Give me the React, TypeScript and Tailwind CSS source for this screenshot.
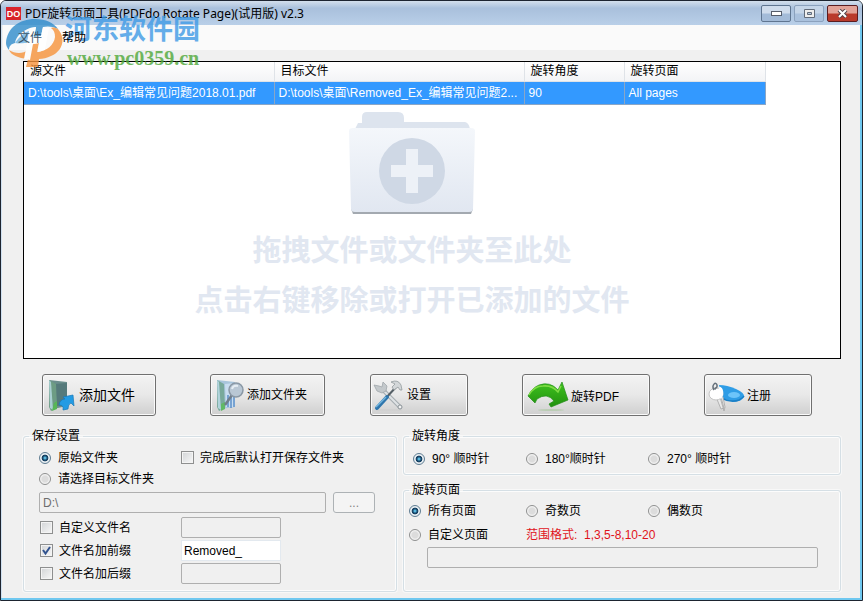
import { useState, type ReactNode } from "react";

function Logo() {
  return (
    <svg className="h-[54px] w-[60px] shrink-0" viewBox="0 0 60 54" aria-hidden="true">
      <path d="M1 27C2 12 14 3 30 3C41 3 49 7 53 13C47 10 42 10 38 11L36 20L29 21L31 11L25 12C17 15 11 20 10 27C6 28 4 30 4 34C2 32 1 29 1 27Z" fill="#2f8ccb" />
      <path d="M10 27C15 20 20 16 24 15L22 27C17 27 13 28 10 27Z" fill="#6db2e2" />
      <path d="M53 13C61 22 58 35 46 40C42 42 38 43 34 43L33 51H21L23 43C13 42 6 39 4 34C10 38 18 38 23 34L24 29L34 27L32 36C42 35 49 29 50 21C50 17 49 14 46 12C49 11 51 12 53 13Z" fill="#f7933a" />
      <path d="M25 12L31 11L29 21L36 20L38 11L44 12L40 34L33 36L34 27L28 28L25 44L19 43Z" fill="#ffffff" />
    </svg>
  );
}

function FolderArt() {
  return (
    <svg className="h-[106px] w-[128px]" viewBox="0 0 128 106" aria-hidden="true">
      <defs>
        <linearGradient id="folder-front" x1="0" y1="0" x2="0" y2="1">
          <stop offset="0" stopColor="#f4f7fb" />
          <stop offset="1" stopColor="#e1e7f1" />
        </linearGradient>
      </defs>
      <path d="M7 18L10 12H14V6Q14 1 19 1H50Q56 1 56 7V11H117Q121 12 122 18V24H7Z" fill="#dde4ee" />
      <path d="M3 98H125L123 103H5Z" fill="#a3a9b0" />
      <path d="M1 20Q1 17 5 17H123Q127 17 127 20L125 98Q125 101 121 101H7Q3 101 3 98Z" fill="url(#folder-front)" />
      <circle cx="64" cy="60" r="33" fill="#cfd8e5" />
      <path d="M58 38H70V54H85V66H70V82H58V66H43V54H58Z" fill="#edf1f7" />
    </svg>
  );
}

function AddFileIcon() {
  return (
    <svg className="size-8" viewBox="0 0 32 32" aria-hidden="true">
      <path d="M4 1L22 3V27L8 30Z" fill="#6a8e8c" />
      <path d="M10 5L22 4V26L12 27Z" fill="#557a7b" />
      <path d="M4 1L11 5L12 29L6 32L4 28Z" fill="#6d9c84" />
      <path d="M4 1L6 3L8 31L5 29Z" fill="#a9cfd2" />
      <path d="M9 24L12 22V30L7 32Z" fill="#57b657" />
      <path d="M14 26Q15 20 20 20L18 18L28 16L29 27L26 24Q23 25 23 30L18 31Q19 26 14 26Z" fill="#229be4" stroke="#1878b8" strokeWidth="0.7" />
    </svg>
  );
}

function AddFolderIcon() {
  return (
    <svg className="size-8" viewBox="0 0 32 32" aria-hidden="true">
      <path d="M4 1L22 3V28L8 30Z" fill="#a8c5dc" />
      <path d="M12 5L22 4V28L13 28Z" fill="#c8ddf0" />
      <path d="M15 16V28M18 14V29M21 14V28" stroke="#5b8ec8" strokeWidth="1.5" />
      <path d="M4 1L11 5L12 29L6 32L4 28Z" fill="#78a99b" />
      <path d="M4 1L6 3L8 31L5 29Z" fill="#b1d3dc" />
      <path d="M8 25L12 23V30L8 32Z" fill="#61b965" />
      <path d="M19 16L12 26" stroke="#717e8b" strokeWidth="2.5" />
      <circle cx="23" cy="11" r="7" fill="#b9c7d4" stroke="#8a98a5" strokeWidth="1.5" />
      <path d="M19 10Q20 6 25 7" fill="none" stroke="#e5edf3" strokeWidth="2" />
    </svg>
  );
}

function SettingsIcon() {
  return (
    <svg className="size-8" viewBox="0 0 32 32" aria-hidden="true">
      <path d="M3 31H29" stroke="#cfcfcf" strokeWidth="1.5" />
      <path d="M10 11L27 28" stroke="#a5acb0" strokeWidth="4" strokeLinecap="round" />
      <path d="M10 11L27 28" stroke="#dfe3e5" strokeWidth="2" strokeLinecap="round" />
      <path d="M1 6L6 7L9 8L10 3L14 7L13 12L9 14L4 12Z" fill="#c3c8cb" stroke="#9aa1a5" strokeWidth="0.7" />
      <circle cx="27" cy="28" r="2" fill="#f2f2f2" stroke="#8c9499" />
      <path d="M23 8L13 19" stroke="#555f66" strokeWidth="2" />
      <path d="M14 18L4 29" stroke="#2f76ad" strokeWidth="4" strokeLinecap="round" />
      <path d="M13 18L3 28" stroke="#75b5dd" strokeWidth="1.5" />
      <path d="M18 3Q25 0 28 6L29 11L27 11L25 8L21 11L19 8L22 5Z" fill="#d3d7d9" stroke="#8b9397" strokeWidth="0.7" />
    </svg>
  );
}

function RotateIcon() {
  return (
    <svg className="h-8 w-[42px]" viewBox="0 0 42 32" aria-hidden="true">
      <defs>
        <linearGradient id="arrow" x1="0" y1="0" x2="0" y2="1">
          <stop offset="0" stopColor="#3fc21f" />
          <stop offset="1" stopColor="#21910f" />
        </linearGradient>
      </defs>
      <ellipse cx="24" cy="29" rx="13" ry="1" fill="#bbcdb5" />
      <path d="M1 15Q5 7 12 4Q23 0 31 9L35 1L41 19L24 26L22 23L27 20Q20 11 10 18L8 22Z" fill="url(#arrow)" stroke="#238c19" strokeWidth="0.7" />
      <path d="M2 14Q7 5 16 5Q25 4 31 11L34 5" fill="none" stroke="#7fdc45" strokeWidth="1.5" />
    </svg>
  );
}

function RegisterIcon() {
  return (
    <svg className="h-8 w-[38px]" viewBox="0 0 38 32" aria-hidden="true">
      <path d="M12 5Q20 5 29 9Q38 13 37 17Q33 23 24 21L14 18Z" fill="#2f9de6" />
      <path d="M14 18Q24 23 32 20Q36 18 37 16" fill="none" stroke="#1a7fc6" strokeWidth="1.5" />
      <ellipse cx="27" cy="15" rx="6" ry="3" fill="#6cc4fa" />
      <path d="M9 17L14 29L17 28L14 17M13 17L17 31L18 27L16 17" fill="#e9e9e9" stroke="#a5a5a5" strokeWidth="0.8" />
      <ellipse cx="9" cy="14" rx="7" ry="6" fill="#ffffff" stroke="#c4c4c4" />
      <path d="M12 8C15 9 16 14 13 18" fill="none" stroke="#ffffff" strokeWidth="3" />
      <path d="M7 10C4 5 9 1 10 5S6 8 9 9" fill="none" stroke="#65707a" strokeWidth="1.5" />
    </svg>
  );
}

interface ToolButtonProps {
  icon: ReactNode;
  label: string;
  className: string;
}

function ToolButton({ icon, label, className }: ToolButtonProps) {
  return (
    <button
      type="button"
      className={`flex h-[42px] items-center gap-[2px] rounded-[3px] border border-[#707070] bg-linear-to-b from-[#f3f3f3] from-0% via-[#e8e8e8] via-50% to-[#cfcfcf] shadow-[inset_0_0_0_1px_#fafafa] ${className}`}
    >
      {icon}
      <span>{label}</span>
    </button>
  );
}

interface RadioProps {
  name: string;
  label: string;
  checked: boolean;
  onChange: () => void;
}

function Radio({ name, label, checked, onChange }: RadioProps) {
  return (
    <label className="flex items-center gap-[7px] whitespace-nowrap">
      <input
        type="radio"
        name={name}
        checked={checked}
        onChange={onChange}
        className="size-3 shrink-0 appearance-none rounded-full border border-[#8e8f8f] bg-[radial-gradient(circle,#dcdcdc_0_40%,#f8f8f8_70%)] checked:border-[#5f7d92] checked:bg-[radial-gradient(circle_at_50%_50%,#5cc0e8_0_8%,#1b4d70_30%,#12395a_44%,#e8eef2_52%)]"
      />
      {label}
    </label>
  );
}

interface CheckProps {
  label: string;
  checked: boolean;
  onChange: (value: boolean) => void;
}

function Check({ label, checked, onChange }: CheckProps) {
  return (
    <label className="flex items-center gap-[6px] whitespace-nowrap">
      <span className="grid size-[13px] shrink-0">
        <input
          type="checkbox"
          checked={checked}
          onChange={(e) => onChange(e.target.checked)}
          className="col-start-1 row-start-1 size-[13px] appearance-none border border-[#8e8f8f] bg-linear-to-br from-[#d2d4d6] to-[#f8f8f8] shadow-[inset_0_0_0_1px_#f4f4f4]"
        />
        {checked && (
          <svg className="pointer-events-none col-start-1 row-start-1 size-[13px]" viewBox="0 0 13 13">
            <path d="M3 6L5.5 9.5L10 3" fill="none" stroke="#32538f" strokeWidth="2" />
          </svg>
        )}
      </span>
      {label}
    </label>
  );
}

const GROUP = "min-w-0 rounded-[3px] border border-[#d5dfe5] shadow-[inset_0_0_0_1px_#fcfcfc,0_0_0_1px_#f8f8f8]";
const LEGEND = "ml-[5px] px-[3px] leading-4";
const FIELD = "h-[21px] rounded-[2px] border border-[#afafaf] bg-[#f0f0f0] px-[3px]";

const HEADERS = ["源文件", "目标文件", "旋转角度", "旋转页面"];
const ROW = ["D:\\tools\\桌面\\Ex_编辑常见问题2018.01.pdf", "D:\\tools\\桌面\\Removed_Ex_编辑常见问题2...", "90", "All pages"];

export default function App() {
  const [target, setTarget] = useState("source");
  const [angle, setAngle] = useState("90");
  const [pages, setPages] = useState("all");
  const [openAfter, setOpenAfter] = useState(false);
  const [custom, setCustom] = useState(false);
  const [prefix, setPrefix] = useState(true);
  const [suffix, setSuffix] = useState(false);
  const [prefixText, setPrefixText] = useState("Removed_");

  return (
    <div className="relative flex min-h-screen flex-col rounded-t-md border border-[#1d2430] bg-[#f0f0f0] font-['Liberation_Sans','Noto_Sans_CJK_SC',sans-serif] text-xs text-black shadow-[inset_-2px_-2px_0_#6fc8f0,inset_1px_0_0_#cfe0f0]">
      <header className="flex h-6 items-start rounded-t-[5px] bg-linear-to-b from-[#d3dfec] from-0% via-[#a9c0dc] via-30% to-[#b9cfe8] pl-[5px]">
        <span className="mt-[6px] flex h-[13px] w-[15px] items-center justify-center bg-[#d8232a] text-[9px] font-bold text-white">DO</span>
        <h1 className="ml-1 flex-1 pt-px font-['Noto_Sans','Noto_Sans_CJK_SC',sans-serif] leading-6">
          PDF旋转页面工具(PDFdo Rotate Page)(试用版) v2.3
        </h1>
        <div className="mt-1 mr-1 flex gap-[3px]">
          <button type="button" aria-label="最小化" className="flex h-[17px] w-[30px] items-center justify-center rounded-[2px] border border-[#5f7590] bg-linear-to-b from-[#cfdcec] from-45% to-[#a3bbd8] to-55%">
            <svg className="h-[5px] w-[11px]" viewBox="0 0 11 5"><rect x="0.5" y="0.5" width="10" height="4" fill="#fff" stroke="#555d6b" /></svg>
          </button>
          <button type="button" aria-label="最大化" className="flex h-[17px] w-[30px] items-center justify-center rounded-[2px] border border-[#8ba1bd] bg-linear-to-b from-[#c5d5e8] from-45% to-[#aac1dd] to-55%">
            <svg className="h-[9px] w-[11px]" viewBox="0 0 11 9"><path d="M0.5 0.5H10.5V8.5H0.5ZM3.5 3.5V5.5H7.5V3.5Z" fill="#eee" fillRule="evenodd" stroke="#626b79" /></svg>
          </button>
          <button type="button" aria-label="关闭" className="flex h-[17px] w-[31px] items-center justify-center rounded-[2px] border border-[#5a1d20] bg-linear-to-b from-[#e2a297] from-45% to-[#b93a2b] to-55%">
            <svg className="h-[9px] w-[11px]" viewBox="0 0 11 9"><path d="M2 1L9 8M9 1L2 8" stroke="#51434a" strokeWidth="4" /><path d="M2 1L9 8M9 1L2 8" stroke="#fff" strokeWidth="2" /></svg>
          </button>
        </div>
      </header>

      <nav className="mx-[2px] flex h-[25px] items-center gap-5 bg-[#fafafa] pt-px pl-[15px]">
        <button type="button" className="relative z-10 text-[#3d5568]">文件</button>
        <button type="button" className="relative z-10">帮助</button>
      </nav>

      <main className="flex flex-1 flex-col pt-[11px] pr-[21px] pb-2 pl-[22px]">
        <section className="h-[298px] overflow-hidden border border-black bg-white">
          <table className="w-[741px] table-fixed border-collapse text-left">
            <colgroup>
              <col className="w-[250px]" />
              <col className="w-[250px]" />
              <col className="w-[100px]" />
              <col className="w-[141px]" />
            </colgroup>
            <thead>
              <tr className="h-[19px] bg-linear-to-b from-white to-[#f3f4f6]">
                {HEADERS.map((h) => (
                  <th key={h} className="border-r border-b border-[#dfe3e8] pt-px pb-0 pl-[6px] leading-[17px] font-normal">{h}</th>
                ))}
              </tr>
            </thead>
            <tbody>
              <tr className="h-[23px] bg-[#3399ff] text-white">
                {ROW.map((cell) => (
                  <td key={cell} className="border-r border-b border-[#8aa6c6] py-0 pl-1 leading-[22px] whitespace-nowrap">{cell}</td>
                ))}
              </tr>
            </tbody>
          </table>
          <div className="flex flex-col items-center pt-[6px] pr-[40px] text-[29px] leading-[50px] font-bold text-[#e1e7f1]">
            <FolderArt />
            <p className="mt-[9px]">拖拽文件或文件夹至此处</p>
            <p>点击右键移除或打开已添加的文件</p>
          </div>
        </section>

        <div className="mt-[15px] grid grid-cols-[168fr_160fr_152fr_182fr_137fr] pl-[19px]">
          <ToolButton icon={<AddFileIcon />} label="添加文件" className="w-[114px] pl-[2px] text-sm" />
          <ToolButton icon={<AddFolderIcon />} label="添加文件夹" className="w-[115px] pl-[2px]" />
          <ToolButton icon={<SettingsIcon />} label="设置" className="w-[98px] pl-[2px]" />
          <ToolButton icon={<RotateIcon />} label="旋转PDF" className="w-[128px] pt-1 pl-1" />
          <ToolButton icon={<RegisterIcon />} label="注册" className="w-[108px] pt-px pl-[2px]" />
        </div>

        <div className="mt-3 grid flex-1 grid-cols-[374fr_438fr] gap-[6px]">
          <fieldset className={GROUP}>
            <legend className={LEGEND}>保存设置</legend>
            <div className="pt-[3px] pl-[15px]">
              <div className="grid h-[21px] grid-cols-[142px_1fr] items-center">
                <Radio name="target" label="原始文件夹" checked={target === "source"} onChange={() => setTarget("source")} />
                <Check label="完成后默认打开保存文件夹" checked={openAfter} onChange={setOpenAfter} />
              </div>
              <div className="flex h-[21px] items-center">
                <Radio name="target" label="请选择目标文件夹" checked={target === "folder"} onChange={() => setTarget("folder")} />
              </div>
              <div className="mt-[3px] flex gap-[7px] pr-[21px]">
                <input aria-label="目标文件夹" disabled defaultValue="D:\" className={`${FIELD} min-w-0 flex-1 text-[#6d6d6d]`} />
                <button type="button" disabled className="h-[21px] w-[42px] rounded-[3px] border border-[#adb2b5] bg-[#f4f4f4] text-[#838383]">...</button>
              </div>
              <div className="mt-1 grid grid-cols-[141px_100px] items-center gap-y-[2px] pl-px">
                <Check label="自定义文件名" checked={custom} onChange={setCustom} />
                <input aria-label="自定义文件名" disabled={!custom} className={FIELD} />
                <Check label="文件名加前缀" checked={prefix} onChange={setPrefix} />
                <input aria-label="前缀" value={prefixText} onChange={(e) => setPrefixText(e.target.value)} className="h-[21px] border border-[#e3e9ef] bg-white px-[2px]" />
                <Check label="文件名加后缀" checked={suffix} onChange={setSuffix} />
                <input aria-label="后缀" disabled={!suffix} className={FIELD} />
              </div>
            </div>
          </fieldset>

          <div className="flex flex-col gap-[7px]">
            <fieldset className={GROUP}>
              <legend className={LEGEND}>旋转角度</legend>
              <div className="grid h-[30px] grid-cols-[113px_122px_1fr] items-center pl-[9px]">
                <Radio name="angle" label="90° 顺时针" checked={angle === "90"} onChange={() => setAngle("90")} />
                <Radio name="angle" label="180°顺时针" checked={angle === "180"} onChange={() => setAngle("180")} />
                <Radio name="angle" label="270° 顺时针" checked={angle === "270"} onChange={() => setAngle("270")} />
              </div>
            </fieldset>
            <fieldset className={`${GROUP} flex-1`}>
              <legend className={LEGEND}>旋转页面</legend>
              <div className="pt-px pl-[5px]">
                <div className="grid h-6 grid-cols-[117px_122px_1fr] items-center">
                  <Radio name="pages" label="所有页面" checked={pages === "all"} onChange={() => setPages("all")} />
                  <Radio name="pages" label="奇数页" checked={pages === "odd"} onChange={() => setPages("odd")} />
                  <Radio name="pages" label="偶数页" checked={pages === "even"} onChange={() => setPages("even")} />
                </div>
                <div className="grid h-6 grid-cols-[117px_1fr] items-center">
                  <Radio name="pages" label="自定义页面" checked={pages === "custom"} onChange={() => setPages("custom")} />
                  <span className="text-[#e0131a]">范围格式:&nbsp; 1,3,5-8,10-20</span>
                </div>
                <div className="flex pr-[22px] pl-[18px]">
                  <input aria-label="页面范围" disabled={pages !== "custom"} className={`${FIELD} min-w-0 flex-1`} />
                </div>
              </div>
            </fieldset>
          </div>
        </div>
      </main>

      <div className="pointer-events-none absolute top-[15px] left-1 flex opacity-80">
        <Logo />
        <div>
          <p className="text-[27px] leading-7 font-bold text-[#3f9be6]">河东软件园</p>
          <p className="pl-[2px] font-['Liberation_Serif',serif] text-xl leading-7 font-bold text-[#4fa83a]">www.pc0359.cn</p>
        </div>
      </div>
    </div>
  );
}
